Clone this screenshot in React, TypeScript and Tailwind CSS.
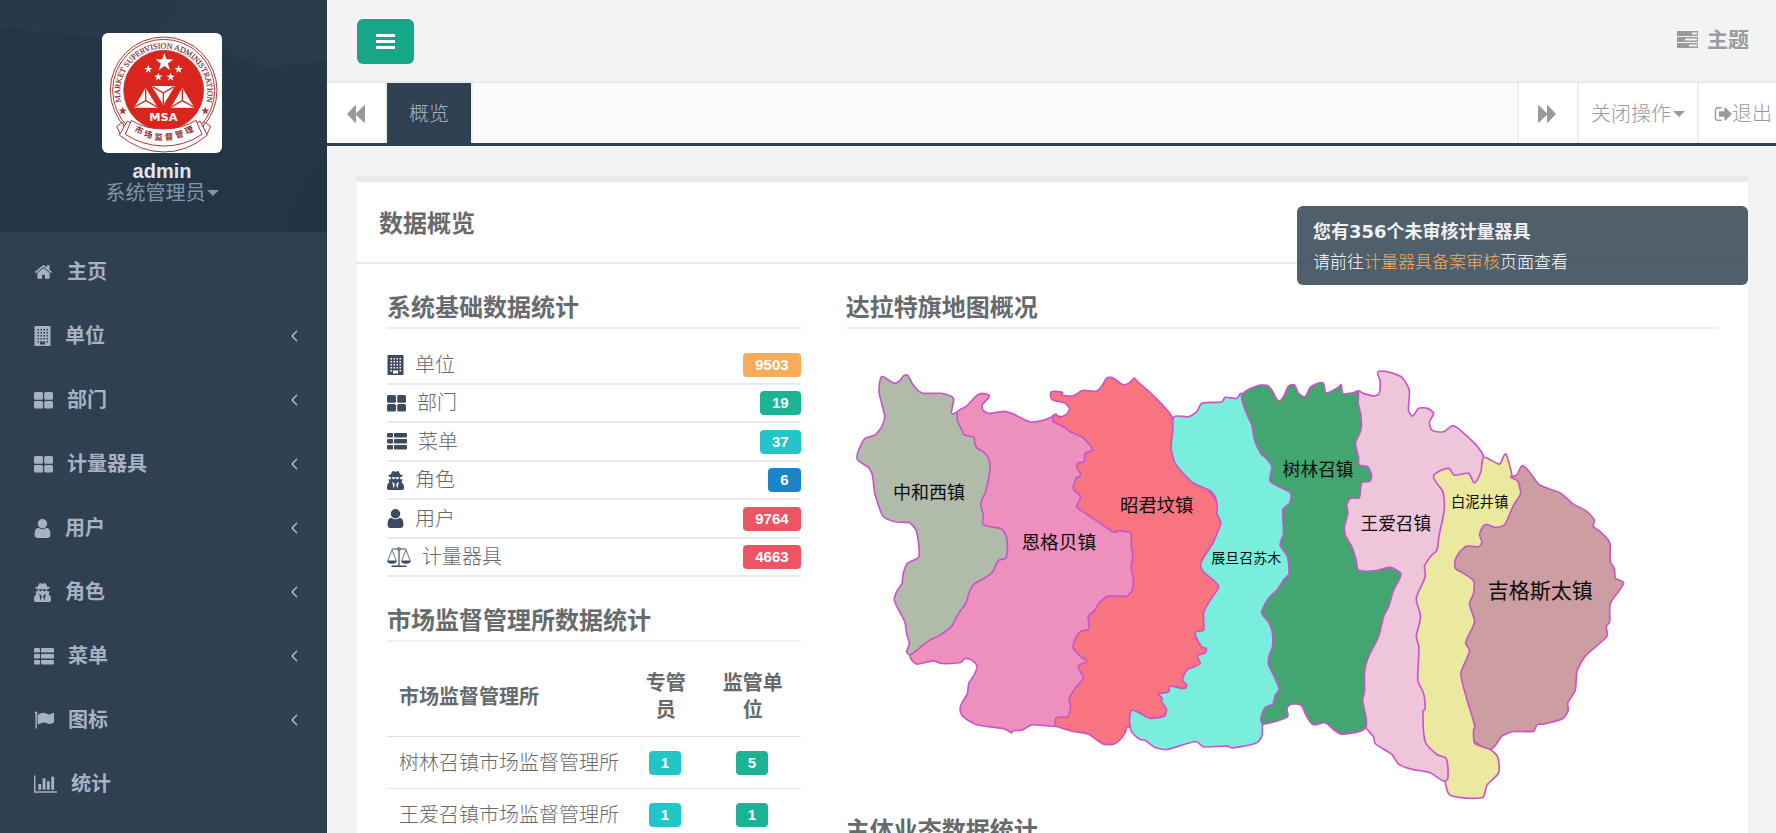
import type { ReactNode } from 'react';
import { FaUserSecret } from 'react-icons/fa';

/* ---------- icons ---------- */

type IconProps = { className?: string };

function Svg({ box, className = '', children }: { box: string; className?: string; children: ReactNode }) {
  return (
    <svg viewBox={box} className={`shrink-0 ${className}`} fill="currentColor" aria-hidden="true">
      {children}
    </svg>
  );
}

const HomeIcon = () => (
  <Svg box="0 0 1792 1792" className="w-[19px] h-5">
    <path d="M1472 992v480q0 26-19 45t-45 19h-384v-384h-256v384h-384q-26 0-45-19t-19-45v-480q0-1 .5-3t.5-3l575-474 575 474q1 2 1 6zm223-69l-62 74q-8 9-21 11h-3q-13 0-21-7l-692-577-692 577q-12 8-24 7-13-2-21-11l-62-74q-8-10-7-23.5t11-21.5l719-599q32-26 76-26t76 26l244 204v-195q0-14 9-23t23-9h192q14 0 23 9t9 23v408l219 182q10 8 11 21.5t-7 23.5z" />
  </Svg>
);

const BuildingIcon = () => (
  <Svg box="0 0 16 20" className="w-[17px] h-5">
    <path
      fillRule="evenodd"
      d="M.5 0h15q.5 0 .5.5v19q0 .5-.5.5h-15q-.5 0-.5-.5v-19q0-.5.5-.5zM3 3v1.5h1.5V3zm3 0v1.500h1.500V3zm3 0v1.500h1.500V3zm3 0v1.500h1.500V3zM3 6v1.500h1.500V6zm3 0v1.500h1.500V6zm3 0v1.500h1.500V6zm3 0v1.500h1.500V6zM3 9v1.500h1.500V9zm3 0v1.500h1.500V9zm3 0v1.500h1.500V9zm3 0v1.500h1.500V9zM3 12v1.500h1.500V12zm3 0v1.500h1.500V12zm3 0v1.500h1.500V12zm3 0v1.500h1.500V12zM3 15v1.500h1.500V15zm9 0v1.500h1.500V15zM5.500 15.500v3h5v-3z"
    />
  </Svg>
);

const ThLargeIcon = () => (
  <Svg box="0 0 19 17" className="w-[19px] h-[17px]">
    <rect x="0" y="0" width="9" height="7.800" rx="1.500" />
    <rect x="10.200" y="0" width="8.800" height="7.800" rx="1.500" />
    <rect x="0" y="9" width="9" height="7.500" rx="1.500" />
    <rect x="10.200" y="9" width="8.800" height="7.500" rx="1.500" />
  </Svg>
);

const ThListIcon = () => (
  <Svg box="0 0 20 17" className="w-5 h-[17px]">
    {[0, 6, 12].map((y) => (
      <g key={y}>
        <rect x="0" y={y} width="6" height="4.500" rx="1" />
        <rect x="7" y={y} width="13" height="4.500" rx="1" />
      </g>
    ))}
  </Svg>
);

const UserIcon = () => (
  <Svg box="256 128 1280 1536" className="w-[17px] h-[19px]">
    <path d="M1536 1399q0 109-62.5 187t-150.5 78h-854q-88 0-150.5-78t-62.5-187q0-85 8.5-160.5t31.5-152 58.5-131 94-89 134.5-34.5q131 128 313 128t313-128q76 0 134.500 34.500t94 89 58.500 131 31.500 152 8.500 160.500zm-256-887q0 159-112.500 271.500t-271.500 112.500-271.500-112.500-112.500-271.500 112.500-271.500 271.500-112.500 271.500 112.500 112.500 271.500z" />
  </Svg>
);

const SecretIcon = () => (
  <FaUserSecret className="w-[17px] h-[19px] shrink-0" preserveAspectRatio="none" aria-hidden="true" />
);

const FlagIcon = () => (
  <Svg box="0 0 1792 1792" className="w-5 h-5">
    <path d="M320 256q0 72-64 110v1266q0 13-9.5 22.5t-22.5 9.5h-64q-13 0-22.5-9.5t-9.5-22.5v-1266q-64-38-64-110 0-53 37.5-90.5t90.5-37.5 90.5 37.5 37.5 90.5zm1472 64v763q0 25-12.5 38.5t-39.5 27.5q-215 116-369 116-61 0-123.5-22t-108.500-48-115.500-48-142.500-22q-192 0-464 146-17 9-33 9-26 0-45-19t-19-45v-742q0-32 31-55 21-14 79-43 236-120 421-120 107 0 200 29t219 88q38 19 88 19 54 0 117.500-21t110-47 88-47 54.500-21q26 0 45 19t19 45z" />
  </Svg>
);

const ChartIcon = () => (
  <Svg box="0 128 2048 1536" className="w-[23px] h-[18px]">
    <path d="M640 896v512h-256v-512h256zm384-512v1024h-256v-1024h256zm1024 1152v128h-2048v-1536h128v1408h1920zm-640-896v768h-256v-768h256zm384-384v1152h-256v-1152h256z" />
  </Svg>
);

const ScaleIcon = () => (
  <Svg box="0 0 24 20" className="w-6 h-5">
    <path d="M4.500 1.500h15v1h-15zM11.400 2h1.200v16.500h-1.200zM4.500 18.500h15V20h-15zM0 13.500h10q-.5 3.200-5 3.200T0 13.500zM14 13.500h10q-.5 3.200-5 3.200t-5-3.200z" />
    <circle cx="12" cy="2" r="1.800" />
    <circle cx="12" cy="2" r=".7" fill="#fff" />
    <path d="M5 3L.8 13.500M5 3l4.200 10.500M19 3l-4.200 10.500M19 3l4.200 10.500" stroke="currentColor" strokeWidth=".8" fill="none" />
  </Svg>
);

const BarsIcon = () => (
  <Svg box="0 0 19 15" className="w-[19px] h-[15px]">
    <rect width="19" height="3" />
    <rect y="6" width="19" height="3" />
    <rect y="12" width="19" height="3" />
  </Svg>
);

const TasksIcon = () => (
  <Svg box="0 0 21 17" className="w-[21px] h-[17px]">
    <path
      fillRule="evenodd"
      d="M0 0h21v5H0zM15 1.500v2h5v-2zM0 6h21v5H0zM8 7.500v2h12v-2zM0 12h21v5H0zM12 13.500v2h8v-2z"
    />
  </Svg>
);

const BackwardIcon = () => (
  <Svg box="0 0 18 18" className="w-[18px] h-[18px]">
    <path d="M9 .5v7.700L17 .5h1v17h-1L9 9.800v7.700H8L0 9 8 .5z" />
  </Svg>
);

const ForwardIcon = () => (
  <Svg box="0 0 18 18" className="w-[18px] h-[18px]">
    <path d="M0 .5h1l8 7.700V.5h1L18 9l-8 8.500H9V9.800L1 17.500H0z" />
  </Svg>
);

const SignOutIcon = () => (
  <Svg box="0 256 1664 1280" className="w-[18px] h-[14px]">
    <path d="M704 1440q0 4 1 20t.5 26.500-3 23.500-10 19.500-20.500 6.500h-320q-119 0-203.500-84.500t-84.500-203.500v-704q0-119 84.500-203.500t203.500-84.500h320q13 0 22.500 9.500t9.500 22.500q0 4 1 20t.5 26.500-3 23.500-10 19.500-20.500 6.500h-320q-66 0-113 47t-47 113v704q0 66 47 113t113 47h312l11.500 1 11.500 3 8 5.500 7 9 2 13.500zm928-544q0 26-19 45l-544 544q-19 19-45 19t-45-19-19-45v-288h-448q-26 0-45-19t-19-45v-384q0-26 19-45t45-19h448v-288q0-26 19-45t45-19 45 19l544 544q19 19 19 45z" />
  </Svg>
);

const AngleLeftIcon = () => (
  <Svg box="0 0 7 12" className="w-[7px] h-3">
    <path d="M6 .8L1.200 6 6 11.200" fill="none" stroke="currentColor" strokeWidth="1.600" />
  </Svg>
);

const Caret = ({ className = '' }: IconProps) => (
  <Svg box="0 0 12 6" className={`w-3 h-[6px] ${className}`}>
    <path d="M0 0h12L6 6z" />
  </Svg>
);

/* ---------- logo ---------- */

function star(cx: number, cy: number, r: number) {
  return Array.from({ length: 10 }, (_, i) => {
    const a = (Math.PI / 5) * i - Math.PI / 2;
    const len = i % 2 ? r * 0.4 : r;
    return `${(cx + len * Math.cos(a)).toFixed(1)},${(cy + len * Math.sin(a)).toFixed(1)}`;
  }).join(' ');
}

const RIBBON_CHARS = [
  { ch: '市', x: 111, y: 292, turn: 24 },
  { ch: '场', x: 139, y: 305, turn: 14 },
  { ch: '监', x: 170, y: 312, turn: 4 },
  { ch: '督', x: 201, y: 312, turn: -4 },
  { ch: '管', x: 232, y: 304, turn: -14 },
  { ch: '理', x: 261, y: 291, turn: -24 },
];

function Logo() {
  return (
    <svg viewBox="0 0 360 360" className="w-[120px] h-[120px] rounded-md bg-white" role="img" aria-label="MSA">
      <defs>
        <path id="ring" d="M56 200A131 131 0 1 1 314 200" />
      </defs>
      <g fill="none" stroke="#a8383a" strokeWidth="3">
        <circle cx="185" cy="172" r="160" />
        <circle cx="185" cy="172" r="153" />
      </g>
      <circle cx="185" cy="172" r="120" fill="#da251d" stroke="#a8383a" strokeWidth="2" />
      <text fontSize="24" fill="#7d2426" stroke="#7d2426" strokeWidth=".5" textAnchor="middle" fontFamily="Liberation Serif, serif">
        <textPath href="#ring" startOffset="50%">MARKET SUPERVISION ADMINISTRATION</textPath>
      </text>
      <g fill="#fff">
        <polygon points={star(187, 88, 28)} />
        <polygon points={star(139, 109, 13)} />
        <polygon points={star(230, 109, 13)} />
        <polygon points={star(169, 132, 13)} />
        <polygon points={star(206, 132, 13)} />
        <path d="M149 159h70l-35 57z" />
        <path d="M131 164l36 60H96z" />
        <path d="M241 164l36 60h-71z" />
      </g>
      <path
        d="M152 161l32 19 32-19M184 180v33M131 168v35l-33 19M131 203l34 19M241 168v35l-33 19M241 203l34 19"
        fill="none"
        stroke="#da251d"
        strokeWidth="4"
      />
      <text x="184" y="265" fontSize="34" fontWeight="700" fill="#fff" textAnchor="middle" fontFamily="DejaVu Sans, sans-serif">
        MSA
      </text>
      <g fill="#b43134">
        <polygon points={star(62, 234, 13)} />
        <polygon points={star(310, 234, 13)} />
      </g>
      <g fill="#fff" stroke="#a8383a" strokeWidth="3" strokeLinejoin="round">
        <path d="M62 268L44 280l10 22 20 6zM308 268l18 12-10 22-20 6z" />
        <path d="M76 264L52 306Q112 356 184 357T316 306L294 264l-14 8Q238 322 184 322T90 272z" />
        <path d="M88 262L70 304Q122 338 184 339T300 304L282 262Q240 288 184 288T88 262z" />
      </g>
      <g fill="#8e2f31" fontSize="25" fontWeight="700" textAnchor="middle" fontFamily="Noto Sans CJK SC, sans-serif">
        {RIBBON_CHARS.map((c) => (
          <text key={c.ch} x={c.x} y={c.y + 9} transform={`rotate(${c.turn} ${c.x} ${c.y})`}>
            {c.ch}
          </text>
        ))}
      </g>
    </svg>
  );
}

/* ---------- township map ---------- */

type Region = { name: string; fill: string; size: number; x: number; y: number; outline: string };

// Drawn in order: a region covers the hidden edge of the one before it.
const REGIONS: Region[] = [
  {
    name: '恩格贝镇', fill: '#ed90bd', size: 56, x: 656, y: 578,
    outline:
      '350,188 380,168 408,138 425,130 448,138 426,165 430,182 450,190 492,184 520,192 570,216 612,210 632,202 641,196 680,205 780,240 820,300 900,560 900,720 800,900 700,1100 648,1128 575,1124 545,1140 518,1142 515,1148 493,1136 410,1124 370,1100 360,1080 365,1060 382,1030 386,1000 402,975 411,948 395,930 375,925 362,937 305,940 280,932 230,942 215,930 210,915 300,700 380,500',
  },
  {
    name: '中和西镇', fill: '#b0bca9', size: 54, x: 267, y: 427,
    outline:
      '125,80 148,92 165,100 180,92 190,78 203,76 215,98 235,123 250,130 305,130 332,138 341,148 334,185 338,192 350,188 352,212 365,238 372,254 402,262 404,280 412,295 432,307 446,327 450,352 438,420 422,462 430,495 428,522 450,530 482,535 497,555 502,590 497,624 474,632 460,662 440,680 402,702 388,725 378,758 355,790 335,828 300,855 265,873 210,915 200,905 208,880 200,850 194,815 175,778 163,750 168,728 186,700 190,668 202,640 236,620 235,575 228,540 208,518 165,515 130,500 115,465 104,430 97,375 85,352 52,328 58,295 75,265 105,255 125,230 134,200 125,160 117,125',
  },
  {
    name: '昭君坟镇', fill: '#f87481', size: 55, x: 950, y: 467,
    outline:
      '640,197 648,192 655,202 680,192 688,175 675,160 635,147 632,128 645,124 668,128 662,134 700,137 728,121 768,124 785,108 800,84 815,82 848,104 865,100 883,84 892,95 935,132 995,200 1040,330 1150,500 1100,900 950,1120 872,1132 860,1132 855,1148 840,1168 820,1182 790,1182 745,1152 700,1144 648,1128 645,1122 650,1102 683,1100 691,1070 688,1042 712,1005 730,982 714,948 740,934 725,922 700,895 703,872 720,845 746,837 745,798 765,780 775,760 803,738 860,738 875,722 880,690 873,650 878,622 873,585 872,550 840,542 820,546 770,512 740,492 710,470 722,440 700,417 708,385 722,375 710,350 714,338 732,335 735,310 757,299 740,275 728,262 690,245 670,230 640,215',
  },
  {
    name: '展旦召苏木', fill: '#7aeedc', size: 42, x: 1218, y: 625,
    outline:
      '1002,200 1045,200 1070,185 1085,160 1145,156 1155,142 1190,145 1203,130 1260,200 1370,430 1370,700 1330,1000 1268,1122 1266,1155 1250,1178 1180,1193 1160,1188 1090,1190 1068,1174 980,1198 945,1192 915,1170 900,1168 875,1145 868,1108 876,1080 928,1104 972,1098 979,1078 965,1055 965,1042 955,1032 986,1025 990,1008 1032,1015 1040,1005 1027,990 1040,960 1080,940 1072,918 1095,908 1098,895 1084,890 1065,847 1090,840 1090,790 1110,750 1135,712 1125,695 1090,665 1081,645 1095,615 1118,580 1142,518 1130,490 1132,470 1125,440 1110,422 1058,398 1005,340 993,295 998,240',
  },
  {
    name: '王爱召镇', fill: '#efc5da', size: 53, x: 1667, y: 522,
    outline:
      '1554,123 1570,130 1600,138 1617,130 1620,95 1613,66 1640,65 1685,82 1707,120 1705,182 1717,198 1735,175 1762,175 1780,190 1768,215 1775,240 1810,245 1840,227 1905,282 1930,320 1930,420 1840,600 1800,1000 1850,1270 1815,1294 1770,1268 1710,1256 1675,1242 1655,1213 1605,1180 1600,1160 1577,1132 1540,1000 1580,800 1500,640 1490,480 1540,300',
  },
  {
    name: '树林召镇', fill: '#43a56f', size: 53, x: 1434, y: 358,
    outline:
      '1205,134 1250,108 1280,106 1298,125 1310,148 1320,152 1330,140 1345,108 1362,104 1375,130 1395,140 1410,112 1448,98 1458,128 1495,112 1503,104 1508,130 1540,128 1554,123 1554,160 1562,195 1562,240 1546,280 1555,320 1557,345 1582,350 1594,375 1590,393 1565,398 1557,443 1530,445 1520,465 1523,490 1513,530 1515,555 1535,590 1548,630 1555,660 1605,662 1650,652 1682,672 1660,720 1645,770 1630,800 1615,860 1585,920 1573,965 1573,1025 1567,1050 1577,1132 1505,1152 1480,1138 1455,1118 1420,1124 1400,1100 1382,1065 1352,1062 1340,1075 1342,1100 1268,1122 1262,1105 1275,1072 1298,1062 1305,1035 1317,1018 1305,985 1286,945 1286,920 1297,890 1297,850 1285,815 1264,788 1285,745 1312,718 1330,690 1346,672 1342,620 1320,585 1330,550 1328,478 1348,460 1352,430 1320,412 1290,393 1295,350 1283,330 1262,310 1243,270 1235,225 1215,180',
  },
  {
    name: '吉格斯太镇', fill: '#cd9ea1', size: 63, x: 2100, y: 722,
    outline:
      '2012,382 2030,374 2048,347 2095,402 2125,416 2162,430 2200,463 2238,483 2263,512 2258,528 2280,545 2308,577 2310,635 2322,655 2326,685 2350,698 2310,760 2308,815 2298,830 2300,858 2235,918 2210,965 2205,1020 2182,1060 2184,1080 2168,1105 2110,1122 2090,1124 2080,1143 2020,1144 1985,1158 1950,1198 1880,1150 1840,900 1830,650 1920,500',
  },
  {
    name: '白泥井镇', fill: '#ebe8a0', size: 43, x: 1918, y: 456,
    outline:
      '1930,322 1955,332 1978,342 1995,312 2003,328 2015,375 2012,382 2032,392 2041,430 2020,465 2005,500 1992,525 1965,532 1935,523 1918,552 1925,575 1915,590 1880,588 1855,610 1844,635 1846,655 1870,670 1900,692 1900,730 1888,760 1903,815 1876,878 1888,902 1862,970 1878,1040 1890,1080 1904,1130 1900,1140 1904,1180 1950,1198 1972,1220 1975,1268 1940,1305 1927,1342 1830,1335 1815,1294 1823,1285 1818,1225 1790,1213 1755,1175 1748,1085 1755,1075 1750,1030 1733,992 1736,890 1728,860 1741,800 1728,745 1755,680 1753,648 1770,620 1790,600 1796,560 1812,480 1808,425 1780,378 1825,354 1842,375 1885,370 1903,398 1922,365',
  },
];

/** Closed soft curve that runs through every outline point. */
function toPath(outline: string) {
  const pts = outline.split(' ').map((p) => p.split(',').map(Number));
  const n = pts.length;
  const at = (i: number) => pts[(i + n) % n];
  let d = `M${pts[0][0]} ${pts[0][1]}`;
  for (let i = 0; i < n; i++) {
    const [p0, p1, p2, p3] = [at(i - 1), at(i), at(i + 1), at(i + 2)];
    // keep the handles short next to long neighbours so the curve never loops
    const len = Math.hypot(p2[0] - p1[0], p2[1] - p1[1]);
    const h1 = Math.hypot(p2[0] - p0[0], p2[1] - p0[1]) || 1;
    const h2 = Math.hypot(p3[0] - p1[0], p3[1] - p1[1]) || 1;
    const k = len * 0.22;
    const c1 = [p1[0] + ((p2[0] - p0[0]) / h1) * k, p1[1] + ((p2[1] - p0[1]) / h1) * k];
    const c2 = [p2[0] - ((p3[0] - p1[0]) / h2) * k, p2[1] - ((p3[1] - p1[1]) / h2) * k];
    d += `C${c1.map(Math.round).join(' ')} ${c2.map(Math.round).join(' ')} ${p2[0]} ${p2[1]}`;
  }
  return `${d}Z`;
}

function TownMap() {
  return (
    <svg viewBox="18 -63 2616 1464" className="block w-full" role="img" aria-label="达拉特旗地图概况">
      {REGIONS.map((r) => (
        <path key={r.name} d={toPath(r.outline)} fill={r.fill} stroke="#c955c8" strokeWidth="5" strokeLinejoin="round" />
      ))}
      <g fill="#0c0c0c" textAnchor="middle" fontFamily="Noto Sans CJK SC, sans-serif">
        {REGIONS.map((r) => (
          <text key={r.name} x={r.x} y={r.y + r.size * 0.35} fontSize={r.size}>
            {r.name}
          </text>
        ))}
      </g>
    </svg>
  );
}

/* ---------- data ---------- */

const MENU = [
  { label: '主页', icon: <HomeIcon />, sub: false },
  { label: '单位', icon: <BuildingIcon />, sub: true },
  { label: '部门', icon: <ThLargeIcon />, sub: true },
  { label: '计量器具', icon: <ThLargeIcon />, sub: true },
  { label: '用户', icon: <UserIcon />, sub: true },
  { label: '角色', icon: <SecretIcon />, sub: true },
  { label: '菜单', icon: <ThListIcon />, sub: true },
  { label: '图标', icon: <FlagIcon />, sub: true },
  { label: '统计', icon: <ChartIcon />, sub: false },
];

const STATS = [
  { label: '单位', icon: <BuildingIcon />, value: 9503, color: 'bg-[#f8ac59]' },
  { label: '部门', icon: <ThLargeIcon />, value: 19, color: 'bg-[#1ab394]' },
  { label: '菜单', icon: <ThListIcon />, value: 37, color: 'bg-[#23c6c8]' },
  { label: '角色', icon: <SecretIcon />, value: 6, color: 'bg-[#1c84c6]' },
  { label: '用户', icon: <UserIcon />, value: 9764, color: 'bg-[#ed5565]' },
  { label: '计量器具', icon: <ScaleIcon />, value: 4663, color: 'bg-[#ed5565]' },
];

const OFFICES = [
  { name: '树林召镇市场监督管理所', staff: 1, units: 5 },
  { name: '王爱召镇市场监督管理所', staff: 1, units: 1 },
];

/* ---------- page ---------- */

function Badge({ color, children }: { color: string; children: ReactNode }) {
  return (
    <span className={`block w-fit rounded px-3 text-[15px] leading-6 font-bold text-white ${color}`}>{children}</span>
  );
}

function SectionTitle({ children, className = '' }: { children: ReactNode; className?: string }) {
  return (
    <h3 className={`pb-[5px] border-b-2 border-[#eeeeee] text-2xl leading-7 font-bold ${className}`}>{children}</h3>
  );
}

function Sidebar() {
  return (
    <aside className="w-[327px] shrink-0 bg-[#2f4050] text-[#a7b1c2]">
      <div className="relative h-[232px] pt-[33px] pr-[3px] flex flex-col items-center bg-[#253747] overflow-hidden">
        <svg viewBox="0 0 327 232" preserveAspectRatio="none" className="absolute inset-0 w-full h-full" aria-hidden="true">
          <path d="M0 0h180l-26 30-50 8L0 28z" fill="#283a4a" />
          <path d="M180 0h147v60l-60 8-110-38z" fill="#283b4b" />
          <path d="M0 28l104 10-40 24-64-4z" fill="#243646" />
          <path d="M222 130l70 70-42 32h-60z" fill="#243545" />
          <path d="M327 150v82h-40l5-32z" fill="#233444" />
        </svg>
        <div className="relative flex flex-col items-center">
          <Logo />
          <strong className="mt-2 text-xl leading-5 font-bold text-[#dfe4ed]">admin</strong>
          <button type="button" className="flex items-center gap-px text-xl leading-6 text-[#8095a8]">
            系统管理员
            <Caret />
          </button>
        </div>
      </div>
      <nav className="pt-2">
        <ul>
          {MENU.map((m) => (
            <li key={m.label}>
              <a href="#" className="h-16 flex items-center gap-[14px] pl-[34px] pr-[29px] text-xl font-bold">
                {m.icon}
                <span className="flex-1">{m.label}</span>
                {m.sub && <AngleLeftIcon />}
              </a>
            </li>
          ))}
        </ul>
      </nav>
    </aside>
  );
}

function TopBar() {
  return (
    <header className="shrink-0">
      <div className="h-[83px] flex items-center justify-between pt-[2px] pl-[30px] pr-[27px] border-b-2 border-[#e7eaec]">
        <button
          type="button"
          aria-label="菜单"
          className="w-[57px] h-[45px] rounded-md bg-[#18a689] text-white flex items-center justify-center"
        >
          <BarsIcon />
        </button>
        <button type="button" className="flex items-center gap-[9px] pb-1 text-[21px] font-bold text-[#999c9e]">
          <TasksIcon />
          主题
        </button>
      </div>
      <div className="h-[63px] flex border-b-[3px] border-[#2f4050] bg-[#fafafa] text-xl text-[#999999]">
        <button type="button" aria-label="向左" className="w-[60px] flex items-center justify-center pt-[2px] bg-white border-r-2 border-[#eeeeee]">
          <BackwardIcon />
        </button>
        <button type="button" className="w-[86px] pt-[2px] bg-[#2f4050] border-r-2 border-[#eeeeee] font-light text-[#a7b1c2]">
          概览
        </button>
        <div className="flex-1" />
        <button type="button" aria-label="向右" className="w-[60px] flex items-center justify-center pt-[2px] pr-[2px] bg-white border-l-2 border-[#eeeeee]">
          <ForwardIcon />
        </button>
        <button type="button" className="w-[120px] flex items-center justify-center gap-[2px] pt-[2px] bg-white border-l-2 border-[#eeeeee] font-light">
          关闭操作
          <Caret />
        </button>
        <a href="#" className="w-[79px] flex items-center pt-[2px] pl-[15px] bg-white border-l-2 border-[#eeeeee] font-light whitespace-nowrap">
          <SignOutIcon />
          退出
        </a>
      </div>
    </header>
  );
}

function BasicStats() {
  return (
    <ul className="mt-[17px] h-[231px] grid grid-rows-6">
      {STATS.map((s) => (
        <li key={s.label} className="flex items-center gap-[11px] pt-px border-b-2 border-[#e7eaec]">
          <span className="text-[#3c4c5e]">{s.icon}</span>
          <span className="flex-1 font-light">{s.label}</span>
          <Badge color={s.color}>{s.value}</Badge>
        </li>
      ))}
    </ul>
  );
}

function OfficeTable() {
  return (
    <table className="mt-4 w-full table-fixed border-collapse">
      <thead>
        <tr className="border-b border-[#dddddd] leading-[27px]">
          <th className="p-3 text-left font-bold">市场监督管理所</th>
          <th className="w-[78px] p-3 text-center font-bold">专管员</th>
          <th className="w-[96px] p-3 text-center font-bold">监管单位</th>
        </tr>
      </thead>
      <tbody>
        {OFFICES.map((o) => (
          <tr key={o.name} className="h-[52px] border-b border-[#e7eaec]">
            <td className="pl-3 font-light whitespace-nowrap">{o.name}</td>
            <td className="px-[22px]"><Badge color="bg-[#23c6c8]">{o.staff}</Badge></td>
            <td className="px-[31px]"><Badge color="bg-[#1ab394]">{o.units}</Badge></td>
          </tr>
        ))}
      </tbody>
    </table>
  );
}

function Toast() {
  return (
    <div role="status" className="absolute top-[206px] right-7 w-[451px] rounded-md bg-[#2f4050]/84 px-4 pt-[13px] pb-[9px] text-[#f0f0f0]">
      <div className="font-['DejaVu_Sans','Noto_Sans_CJK_SC',sans-serif] text-lg leading-[26px] font-bold">
        您有356个未审核计量器具
      </div>
      <div className="pt-[5px] text-[17px] leading-[26px] font-light text-white">
        请前往<a href="#" className="text-[#f8ac59]">计量器具备案审核</a>页面查看
      </div>
    </div>
  );
}

export default function App() {
  return (
    <div className="relative h-screen flex overflow-hidden bg-[#f3f3f4] font-['Liberation_Sans','Noto_Sans_CJK_SC',sans-serif] text-xl text-[#676a6c]">
      <Sidebar />
      <div className="flex-1 min-w-0 flex flex-col">
        <TopBar />
        <main className="flex-1 min-h-0 overflow-y-auto [scrollbar-width:none] pt-[30px] pl-[30px] pr-7">
          <section className="border-t-6 border-[#e7eaec] bg-white">
            <h2 className="h-[82px] flex items-center pt-1 pl-[22px] border-b-2 border-[#e7eaec] text-2xl font-bold">数据概览</h2>
            <div className="grid grid-cols-3 gap-[45px] p-[30px]">
              <div>
                <SectionTitle>系统基础数据统计</SectionTitle>
                <BasicStats />
                <SectionTitle className="mt-[30px]">市场监督管理所数据统计</SectionTitle>
                <OfficeTable />
              </div>
              <div className="col-span-2">
                <SectionTitle>达拉特旗地图概况</SectionTitle>
                <TownMap />
                <SectionTitle>主体业态数据统计</SectionTitle>
              </div>
            </div>
          </section>
        </main>
      </div>
      <Toast />
    </div>
  );
}
